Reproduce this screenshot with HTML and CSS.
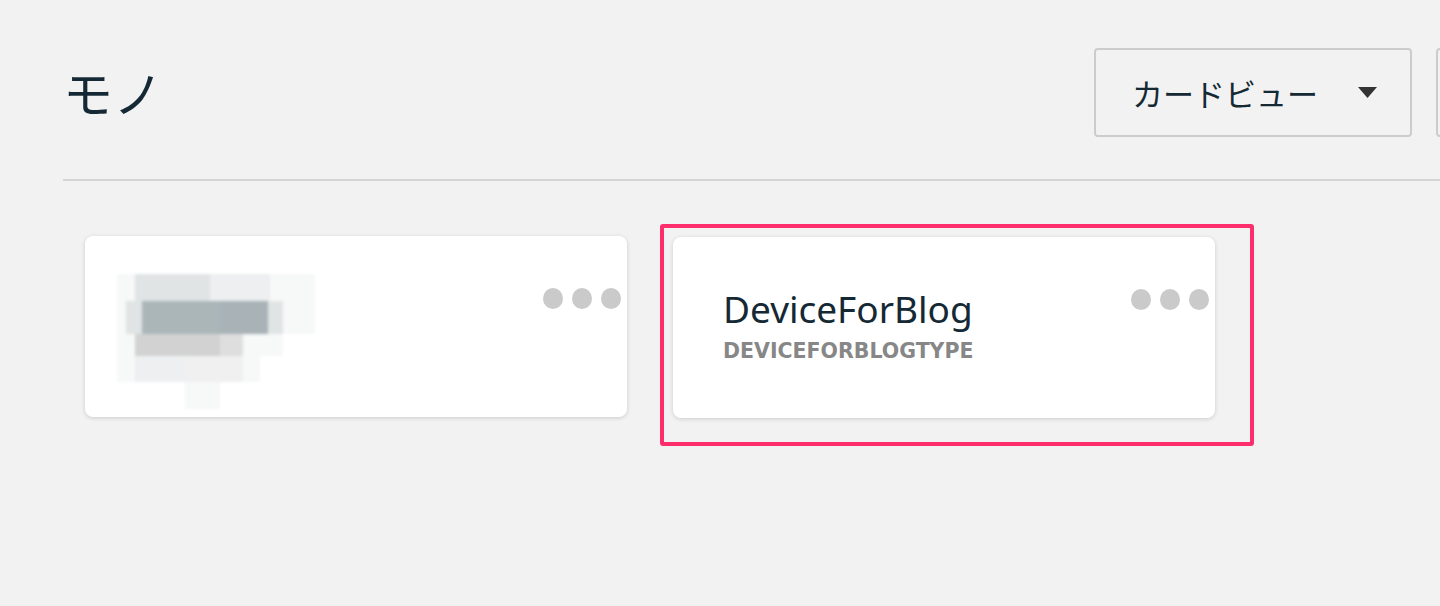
FILE: index.html
```html
<!DOCTYPE html>
<html lang="ja">
<head>
<meta charset="utf-8">
<title>モノ</title>
<link rel="stylesheet" href="styles.css">
</head>
<body>
<div class="page">
  <header class="header">
    <h1 class="title">モノ</h1>
    <div class="actions">
      <button class="select">
        <span class="select-label">カードビュー</span>
        <svg class="caret" width="19" height="11" viewBox="0 0 19 11"><path d="M0 0 H19 L9.5 11 Z" fill="#333"/></svg>
      </button>
      <button class="select second" aria-label="作成"></button>
    </div>
  </header>
  <div class="divider"></div>
  <main class="cards">
    <div class="card">
      <div class="blur">
        <div class="row ra"><i class="w18 s1"></i><i class="w75 s3"></i><i class="w60 s2"></i><i class="w45 s1"></i></div>
        <div class="row rb"><i class="w9 s1"></i><i class="w16 s3"></i><i class="w78 s5"></i><i class="w48 s6"></i><i class="w15 s3"></i><i class="w32 s1"></i></div>
        <div class="row rc"><i class="w18 s1"></i><i class="w85 s4"></i><i class="w23 s7"></i><i class="w40 s1"></i></div>
        <div class="row rd"><i class="w18 s1"></i><i class="w50 s2"></i><i class="w58 s8"></i><i class="w17 s1"></i></div>
        <div class="row re"><i class="w68 s0"></i><i class="w35 s1"></i></div>
      </div>
      <div class="dots"><span></span><span></span><span></span></div>
    </div>
    <div class="card-wrap">
      <div class="card">
        <div class="info">
          <div class="name">DeviceForBlog</div>
          <div class="type">DEVICEFORBLOGTYPE</div>
        </div>
        <div class="dots"><span></span><span></span><span></span></div>
      </div>
      <div class="highlight"></div>
    </div>
  </main>
</div>
</body>
</html>
```
FILE: styles.css
```css
html, body {
  margin: 0;
  padding: 0;
  background: #f2f2f2;
  overflow: hidden;
}
body {
  font-family: "Noto Sans", "Noto Sans CJK JP", sans-serif;
  color: #152935;
  width: 1440px;
  height: 606px;
}
.page {
  width: 1700px;
}
.header {
  display: flex;
  justify-content: space-between;
  align-items: flex-start;
  padding: 48px 0 0 63px;
  width: 1636px;
  height: 179px;
  box-sizing: border-box;
}
.title {
  margin: 18px 0 0 0;
  font-family: "Noto Sans CJK JP", sans-serif;
  font-weight: 400;
  font-size: 50px;
  line-height: 50px;
  color: #152935;
}
.actions {
  display: flex;
  gap: 24px;
}
.select {
  flex: none;
  display: flex;
  align-items: center;
  justify-content: space-between;
  width: 318px;
  height: 89px;
  box-sizing: border-box;
  border: 2px solid #cccccc;
  border-radius: 4px;
  background: #f2f2f2;
  padding: 0 33px 0 36px;
  margin: 0;
  font-family: "Noto Sans CJK JP", sans-serif;
  font-size: 31px;
  color: #152935;
}
.select-label {
  line-height: 1;
}
.caret {
  display: block;
}
.second {
  width: 200px;
}
.divider {
  margin-left: 63px;
  height: 2px;
  background: #d5d5d5;
  width: 1400px;
}
.cards {
  display: flex;
  gap: 46px;
  padding: 55px 0 0 85px;
}
.card-wrap {
  position: relative;
  margin-top: 1px;
}
.card {
  width: 542px;
  height: 181px;
  box-sizing: border-box;
  background: #ffffff;
  border-radius: 8px;
  box-shadow: 0 1px 4px rgba(0, 0, 0, 0.16);
  display: flex;
  justify-content: space-between;
  align-items: flex-start;
}
.dots {
  display: flex;
  gap: 9px;
  margin: 52px 6px 0 0;
}
.dots span {
  width: 20px;
  height: 21px;
  border-radius: 50%;
  background: #cacaca;
}
.info {
  padding: 50px 0 0 50px;
  display: flex;
  flex-direction: column;
}
.name {
  font-size: 37px;
  line-height: 44px;
  color: #152935;
}
.type {
  font-family: "DejaVu Sans", "Noto Sans", sans-serif;
  font-size: 20.5px;
  line-height: 26px;
  font-weight: 700;
  color: #878787;
  margin-top: 7px;
  letter-spacing: 0;
}
.highlight {
  position: absolute;
  left: -13px;
  top: -13px;
  width: 594px;
  height: 222px;
  box-sizing: border-box;
  border: 4px solid #fe2d6b;
  border-radius: 3px;
  pointer-events: none;
}
.blur {
  padding: 38px 0 0 32px;
  filter: blur(1.5px);
  display: flex;
  flex-direction: column;
}
.row {
  display: flex;
}
.row i {
  display: block;
  height: 100%;
}
.ra { height: 27px; }
.rb { height: 33px; }
.rc { height: 22px; }
.rd { height: 26px; }
.re { height: 27px; }
.w9 { width: 9px; }
.w15 { width: 15px; }
.w16 { width: 16px; }
.w17 { width: 17px; }
.w18 { width: 18px; }
.w23 { width: 23px; }
.w32 { width: 32px; }
.w35 { width: 35px; }
.w40 { width: 40px; }
.w45 { width: 45px; }
.w48 { width: 48px; }
.w50 { width: 50px; }
.w58 { width: 58px; }
.w60 { width: 60px; }
.w68 { width: 68px; }
.w75 { width: 75px; }
.w78 { width: 78px; }
.w85 { width: 85px; }
.s0 { background: #ffffff; }
.s1 { background: #f7f8f8; }
.s2 { background: #edeff0; }
.s3 { background: #e0e4e5; }
.s4 { background: #d2d2d2; }
.s5 { background: #abb6b9; }
.s6 { background: #a8b2b7; }
.s7 { background: #dedede; }
.s8 { background: #f0f0f0; }
```
